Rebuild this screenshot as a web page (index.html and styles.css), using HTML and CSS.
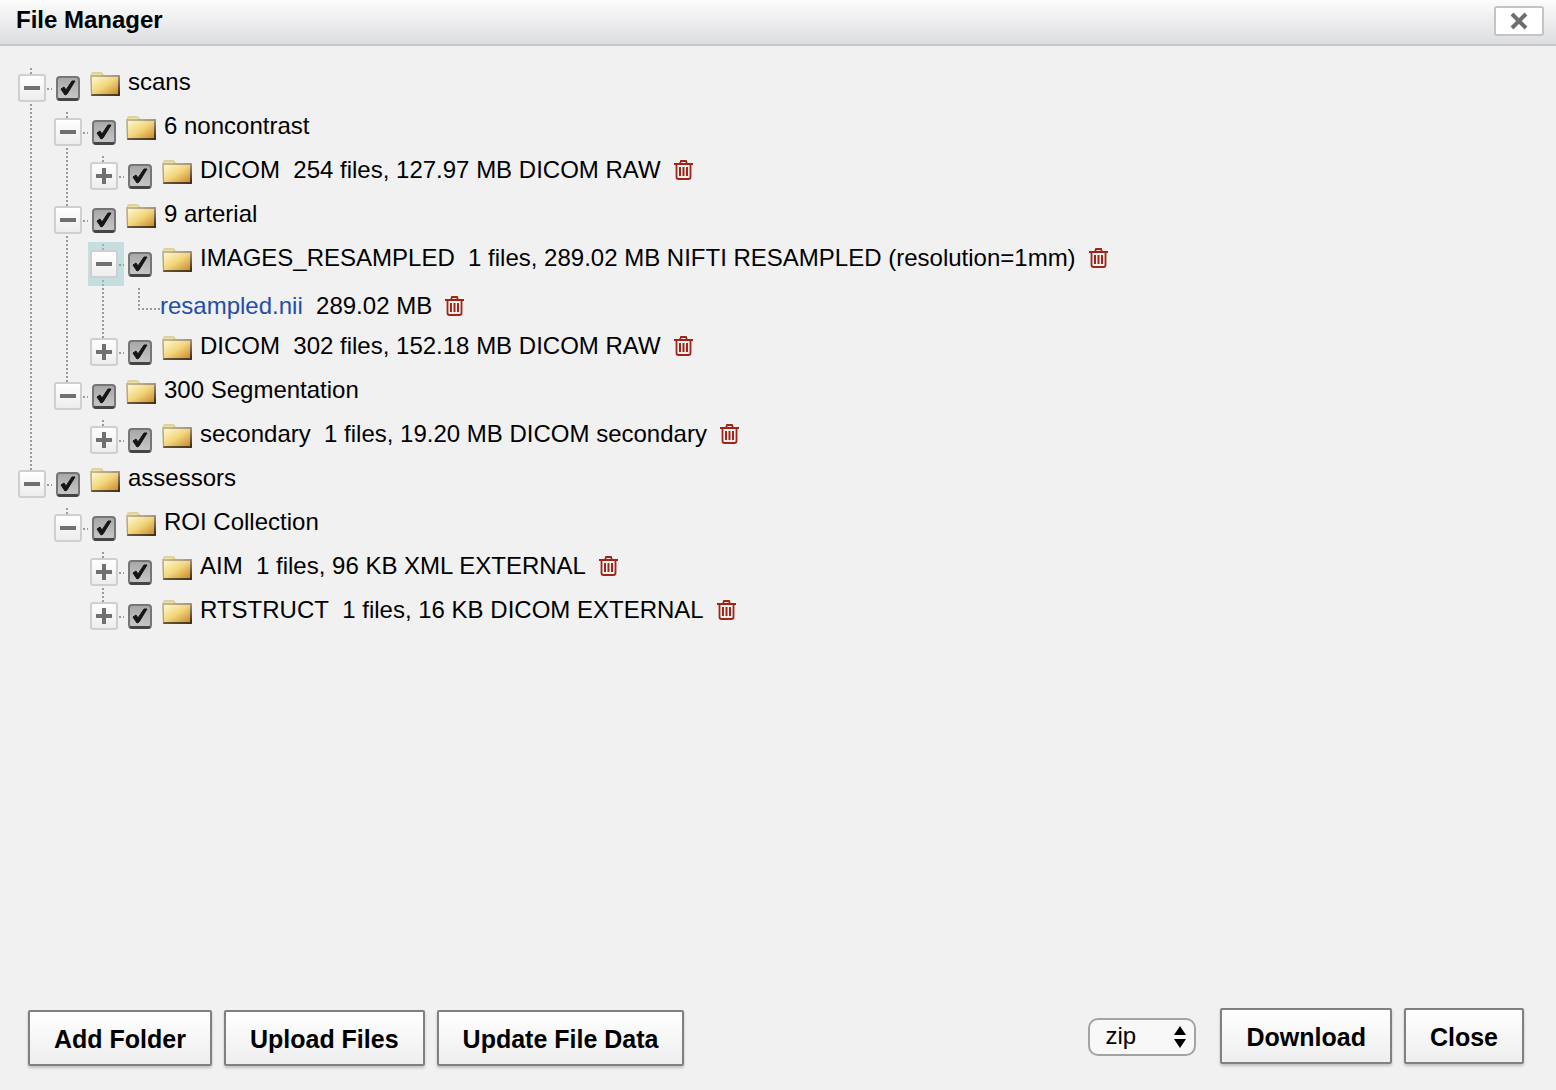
FILE: index.html
```html
<!DOCTYPE html>
<html lang="en">
<head>
<meta charset="utf-8">
<title>File Manager</title>
<link rel="stylesheet" href="styles.css">
</head>
<body>
<svg class="sprite" aria-hidden="true">
  <defs>
    <linearGradient id="gold" x1="0" y1="0" x2="1" y2="1">
      <stop offset="0" stop-color="#fdf8cf"/>
      <stop offset=".5" stop-color="#f3d67c"/>
      <stop offset="1" stop-color="#cc8a2c"/>
    </linearGradient>
    <linearGradient id="rim" x1="0" y1="0" x2="1" y2="1">
      <stop offset="0" stop-color="#c9bd98"/>
      <stop offset=".5" stop-color="#a8947a"/>
      <stop offset="1" stop-color="#2e2008"/>
    </linearGradient>
    <symbol id="folder" viewBox="0 0 30 24">
      <path d="M1 5V2Q1 0 3 0H11Q13 0 13 2L15 3V5Z" fill="#ddd2a0"/>
      <path d="M3 2H11V4H3Z" fill="#ece5ae"/>
      <path d="M0 3H30V24H1Z" fill="url(#rim)"/>
      <path d="M2 5H28V22H2Z" fill="url(#gold)"/>
      <path d="M2 22H30V24H1Z" fill="#4a3a1c" opacity=".65"/>
    </symbol>
    <symbol id="trash" viewBox="0 0 20 22">
      <path d="M0 5H19M6 5L7 2H12L13 5M2.500 5V18Q2.500 20 4.500 20H14.500Q16.500 20 16.500 18V5" fill="none" stroke="#a02518" stroke-width="1.800"/>
      <path d="M6 8V17M9.500 8V17M13 8V17" fill="none" stroke="#a02518" stroke-width="2"/>
    </symbol>
    <symbol id="minus" viewBox="0 0 24 24"><path d="M4 12H20" stroke="#707070" stroke-width="4"/></symbol>
    <symbol id="plus" viewBox="0 0 24 24"><path d="M4 12H20M12 4V20" stroke="#707070" stroke-width="4"/></symbol>
  </defs>
</svg>
<div class="dialog">
  <header class="titlebar">
    <h1>File Manager</h1>
    <button class="dismiss" type="button" aria-label="Close dialog"><svg width="18" height="18" viewBox="0 0 18 18"><path d="M2 2L16 16M16 2L2 16" stroke="#6e6e6e" stroke-width="4"/></svg></button>
  </header>
  <main class="content">
    <ul class="tree">
      <li>
        <div class="row"><button class="toggle" type="button" aria-label="Collapse"><svg><use href="#minus"/></svg></button><input type="checkbox" id="n1" checked><svg class="folder"><use href="#folder"/></svg><label for="n1">scans</label></div>
        <ul>
          <li>
            <div class="row"><button class="toggle" type="button" aria-label="Collapse"><svg><use href="#minus"/></svg></button><input type="checkbox" id="n2" checked><svg class="folder"><use href="#folder"/></svg><label for="n2">6 noncontrast</label></div>
            <ul>
              <li><div class="row"><button class="toggle" type="button" aria-label="Expand"><svg><use href="#plus"/></svg></button><input type="checkbox" id="n3" checked><svg class="folder"><use href="#folder"/></svg><label for="n3">DICOM&nbsp; 254 files, 127.97 MB DICOM RAW</label><button class="delete" type="button" aria-label="Delete"><svg><use href="#trash"/></svg></button></div></li>
            </ul>
          </li>
          <li>
            <div class="row"><button class="toggle" type="button" aria-label="Collapse"><svg><use href="#minus"/></svg></button><input type="checkbox" id="n4" checked><svg class="folder"><use href="#folder"/></svg><label for="n4">9 arterial</label></div>
            <ul>
              <li>
                <div class="row"><button class="toggle focused" type="button" aria-label="Collapse"><svg><use href="#minus"/></svg></button><input type="checkbox" id="n5" checked><svg class="folder"><use href="#folder"/></svg><label for="n5">IMAGES_RESAMPLED&nbsp; 1 files, 289.02 MB NIFTI RESAMPLED (resolution=1mm)</label><button class="delete" type="button" aria-label="Delete"><svg><use href="#trash"/></svg></button></div>
                <ul>
                  <li class="leaf"><div class="row"><a href="#resampled">resampled.nii</a><span>&nbsp; 289.02 MB</span><button class="delete" type="button" aria-label="Delete"><svg><use href="#trash"/></svg></button></div></li>
                </ul>
              </li>
              <li><div class="row"><button class="toggle" type="button" aria-label="Expand"><svg><use href="#plus"/></svg></button><input type="checkbox" id="n6" checked><svg class="folder"><use href="#folder"/></svg><label for="n6">DICOM&nbsp; 302 files, 152.18 MB DICOM RAW</label><button class="delete" type="button" aria-label="Delete"><svg><use href="#trash"/></svg></button></div></li>
            </ul>
          </li>
          <li>
            <div class="row"><button class="toggle" type="button" aria-label="Collapse"><svg><use href="#minus"/></svg></button><input type="checkbox" id="n7" checked><svg class="folder"><use href="#folder"/></svg><label for="n7">300 Segmentation</label></div>
            <ul>
              <li><div class="row"><button class="toggle" type="button" aria-label="Expand"><svg><use href="#plus"/></svg></button><input type="checkbox" id="n8" checked><svg class="folder"><use href="#folder"/></svg><label for="n8">secondary&nbsp; 1 files, 19.20 MB DICOM secondary</label><button class="delete" type="button" aria-label="Delete"><svg><use href="#trash"/></svg></button></div></li>
            </ul>
          </li>
        </ul>
      </li>
      <li>
        <div class="row"><button class="toggle" type="button" aria-label="Collapse"><svg><use href="#minus"/></svg></button><input type="checkbox" id="n9" checked><svg class="folder"><use href="#folder"/></svg><label for="n9">assessors</label></div>
        <ul>
          <li>
            <div class="row"><button class="toggle" type="button" aria-label="Collapse"><svg><use href="#minus"/></svg></button><input type="checkbox" id="n10" checked><svg class="folder"><use href="#folder"/></svg><label for="n10">ROI Collection</label></div>
            <ul>
              <li><div class="row"><button class="toggle" type="button" aria-label="Expand"><svg><use href="#plus"/></svg></button><input type="checkbox" id="n11" checked><svg class="folder"><use href="#folder"/></svg><label for="n11">AIM&nbsp; 1 files, 96 KB XML EXTERNAL</label><button class="delete" type="button" aria-label="Delete"><svg><use href="#trash"/></svg></button></div></li>
              <li><div class="row"><button class="toggle" type="button" aria-label="Expand"><svg><use href="#plus"/></svg></button><input type="checkbox" id="n12" checked><svg class="folder"><use href="#folder"/></svg><label for="n12">RTSTRUCT&nbsp; 1 files, 16 KB DICOM EXTERNAL</label><button class="delete" type="button" aria-label="Delete"><svg><use href="#trash"/></svg></button></div></li>
            </ul>
          </li>
        </ul>
      </li>
    </ul>
  </main>
  <footer class="actions">
    <div class="group edit">
      <button class="btn" type="button">Add Folder</button>
      <button class="btn" type="button">Upload Files</button>
      <button class="btn" type="button">Update File Data</button>
    </div>
    <div class="group">
      <select class="format" aria-label="Archive format"><option>zip</option><option>tar.gz</option></select>
      <button class="btn" type="button">Download</button>
      <button class="btn" type="button">Close</button>
    </div>
  </footer>
</div>
</body>
</html>
```
FILE: styles.css
```css
* { box-sizing: border-box; }

body {
  margin: 0;
  background: #f1f1f1;
  color: #000;
  font: 24px/32px "Liberation Sans", Arial, Helvetica, sans-serif;
}

button, select, input { margin: 0; font: inherit; color: inherit; }
svg { display: block; }
.sprite { width: 0; height: 0; position: absolute; }

.dialog { display: flex; flex-direction: column; min-height: 100vh; }

.titlebar {
  display: flex;
  justify-content: space-between;
  align-items: flex-start;
  height: 46px;
  padding: 4px 12px 0 16px;
  border-bottom: 2px solid #c8c9cb;
  background: linear-gradient(#fcfcfc, #dcdde0);
}
.titlebar h1 { margin: 0; font-size: 24px; font-weight: bold; }
.dismiss {
  display: grid;
  place-items: center;
  width: 50px;
  height: 30px;
  margin-top: 2px;
  padding: 0;
  border: 2px solid #c4c4c4;
  border-radius: 3px;
  background: #fff;
}

.content { flex: 1; padding: 20px 16px; }

/* Tree: each item draws the dotted line that leads to its next sibling */
.tree, .tree ul { margin: 0; padding: 0; list-style: none; }
.tree ul { padding-left: 36px; }
.tree li {
  background: repeating-linear-gradient(transparent 0 2px, #9a9a9a 2px 4px) 14px 0 / 2px 100% no-repeat;
}
.tree li:last-child { background-size: 2px 8px; }
.row { display: flex; align-items: flex-start; height: 44px; white-space: nowrap; }

.toggle {
  width: 36px;
  height: 44px;
  padding: 8px 2px;
  border: 0;
  background: repeating-linear-gradient(90deg, #9a9a9a 0 2px, transparent 2px 4px) 31px 22px / 6px 2px no-repeat;
}
.toggle.focused { background-color: rgba(153, 205, 205, .5); }
.toggle svg {
  width: 28px;
  height: 28px;
  border: 2px solid #cfcfcf;
  border-radius: 3px;
  background: linear-gradient(#fff, #ededed);
}

.row input {
  appearance: none;
  width: 24px;
  height: 25px;
  margin: 10px 10px 0 4px;
  border: 2px solid #767676;
  border-bottom: 3px solid #444;
  border-radius: 4px;
  background: linear-gradient(#a8a8a8, #c6c6c6);
}
.row input:checked {
  background: url("data:image/svg+xml,%3Csvg xmlns='http://www.w3.org/2000/svg' viewBox='0 0 20 20'%3E%3Cpath d='M3 11l3-2 2 3 6-9 3 0-8 13-2 1z' fill='%23151515' stroke='%23151515' stroke-width='1' stroke-linejoin='round'/%3E%3C/svg%3E") center / 20px 20px no-repeat, linear-gradient(#a8a8a8, #c6c6c6);
}
.folder { width: 30px; height: 24px; margin: 6px 8px 0 0; }

.delete { margin: 5px 0 0 13px; padding: 0; border: 0; background: none; }
.delete svg { width: 20px; height: 22px; }

.leaf .row { padding: 4px 0 0 36px; }
.tree .leaf:last-child {
  background:
    repeating-linear-gradient(transparent 0 2px, #9a9a9a 2px 4px) 14px 0 / 2px 24px no-repeat,
    repeating-linear-gradient(90deg, #9a9a9a 0 2px, transparent 2px 4px) 14px 22px / 22px 2px no-repeat;
}
.leaf a { color: #1f4fa8; text-decoration: none; }

.actions {
  display: flex;
  justify-content: space-between;
  align-items: flex-start;
  padding: 0 32px 24px 28px;
}
.group { display: flex; align-items: center; gap: 12px; }
.edit { padding-top: 2px; }
.btn {
  height: 56px;
  padding: 2px 24px 0;
  border: 2px solid #808080;
  border-radius: 2px;
  background: linear-gradient(#fff, #eee);
  box-shadow: 0 2px 3px rgba(0, 0, 0, .2);
  font-size: 25px;
  font-weight: bold;
}
.format {
  appearance: none;
  width: 108px;
  height: 38px;
  margin: 2px 12px 0 0;
  padding: 0 32px 2px 15px;
  border: 2px solid #a3a3a3;
  border-radius: 10px;
  background: url("data:image/svg+xml,%3Csvg xmlns='http://www.w3.org/2000/svg' viewBox='0 0 12 22'%3E%3Cpath d='M6 0l6 9H0zM6 22l6-9H0z'/%3E%3C/svg%3E") right 8px center / 12px 22px no-repeat #f8f8f8;
}
```
